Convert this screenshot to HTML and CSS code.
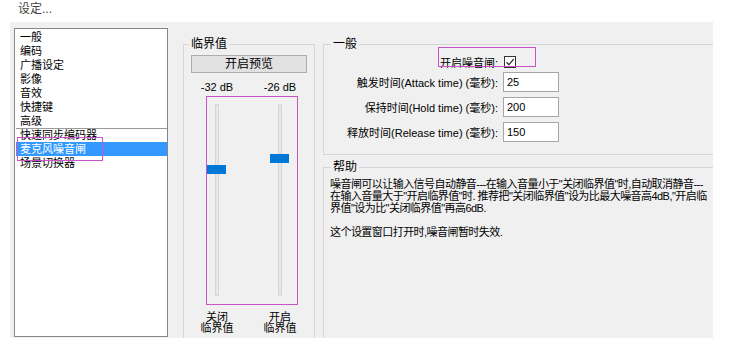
FILE: index.html
```html
<!DOCTYPE html>
<html lang="zh-CN">
<head>
    <meta charset="UTF-8">
    <title>设定</title>
    <link rel="stylesheet" href="styles.css">
</head>
<body>

<div class="title">设定...</div>

<div class="window">
    <div class="nav">
        <div class="item">一般</div>
        <div class="item">编码</div>
        <div class="item">广播设定</div>
        <div class="item">影像</div>
        <div class="item">音效</div>
        <div class="item">快捷键</div>
        <div class="item">高级</div>
        <div class="item sep">快速同步编码器</div>
        <div class="item active">麦克风噪音闸</div>
        <div class="item">场景切换器</div>
        <span class="mark mark-nav"></span>
    </div>

    <fieldset class="group group-threshold">
        <legend>临界值</legend>
        <button class="preview">开启预览</button>
        <div class="cols db">
            <span class="col"><span>-32 dB</span></span>
            <span class="col"><span>-26 dB</span></span>
        </div>
        <div class="meter">
            <div class="slider"><div class="track"></div><div class="thumb thumb-close"></div></div>
            <div class="slider"><div class="track"></div><div class="thumb thumb-open"></div></div>
        </div>
        <div class="cols names">
            <span class="col"><span>关闭<br>临界值</span></span>
            <span class="col"><span>开启<br>临界值</span></span>
        </div>
    </fieldset>

    <div class="side">
        <fieldset class="group group-general">
            <legend>一般</legend>
            <div class="field check">
                <span class="label">开启噪音闸:</span>
                <span class="checkbox">
                    <svg width="10" height="10" viewBox="0 0 10 10"><path d="M1.5 5.2 L4 7.6 L8.6 2.2" fill="none" stroke="#222" stroke-width="1.2"/></svg>
                </span>
                <span class="mark mark-check"></span>
            </div>
            <div class="field first">
                <label class="label">触发时间(Attack time) (毫秒):</label>
                <input type="text" value="25">
            </div>
            <div class="field">
                <label class="label">保持时间(Hold time) (毫秒):</label>
                <input type="text" value="200">
            </div>
            <div class="field">
                <label class="label">释放时间(Release time) (毫秒):</label>
                <input type="text" value="150">
            </div>
        </fieldset>

        <fieldset class="group group-help">
            <legend>帮助</legend>
            <p>噪音闸可以让输入信号自动静音---在输入音量小于"关闭临界值"时,自动取消静音---<br>在输入音量大于"开启临界值"时. 推荐把"关闭临界值"设为比最大噪音高4dB,"开启临<br>界值"设为比"关闭临界值"再高6dB.</p>
            <p class="gap">这个设置窗口打开时,噪音闸暂时失效.</p>
        </fieldset>
    </div>
</div>

</body>
</html>
```

FILE: styles.css
```css
body {
    margin: 0;
    background: #fff;
    font-family: "Liberation Sans", "Noto Sans CJK SC", sans-serif;
    font-size: 11px;
    color: #000;
}

.title {
    height: 22px;
    line-height: 18px;
    padding-left: 18px;
    font-size: 12px;
    color: #444;
}

.window {
    margin-left: 10px;
    width: 703px;
    height: 316px;
    padding: 6px 0 0 4px;
    box-sizing: border-box;
    background: #f0f0f0;
    display: flex;
    align-items: flex-start;
    overflow: hidden;
}

/* список разделов */
.nav {
    position: relative;
    flex-shrink: 0;
    width: 154px;
    height: 309px;
    padding-top: 1px;
    box-sizing: border-box;
    border: 1px solid #828790;
    background: #fff;
}

.item {
    height: 14px;
    line-height: 14px;
    margin-left: 1px;
    padding-left: 4px;
    white-space: nowrap;
}

.item.sep {
    box-shadow: inset 0 1px #9a9a9a;
}

.item.active {
    background: #3399ff;
    color: #fff;
}

.mark {
    position: absolute;
    border: 1px solid #c953c9;
    box-sizing: border-box;
}

.mark-nav {
    left: 2px;
    top: 108px;
    width: 86px;
    height: 24px;
}

/* group boxes */
.group {
    margin: 0;
    padding: 0;
    min-width: 0;
    border: 1px solid #d5d5d5;
    flex-shrink: 0;
}

.group legend {
    margin-left: 5px;
    padding: 0 2px;
    font-size: 12px;
    line-height: 14px;
}

.group-threshold {
    margin: 9px 0 0 15px;
    width: 132px;
    height: 310px;
    box-sizing: border-box;
}

.preview {
    display: block;
    margin: 4px 0 0 7px;
    width: 116px;
    height: 18px;
    padding: 0;
    border: 1px solid #adadad;
    background: #e1e1e1;
    font-family: inherit;
    font-size: 12px;
    line-height: 16px;
    color: #000;
}

.cols {
    display: flex;
    gap: 43px;
    margin-left: 23px;
}

.col {
    width: 20px;
    display: flex;
    justify-content: center;
    white-space: nowrap;
    text-align: center;
}

.db {
    margin-top: 7px;
    line-height: 14px;
}

.names {
    margin-top: 7px;
    line-height: 11px;
}

.meter {
    margin: 2px 0 0 22px;
    width: 92px;
    height: 209px;
    box-sizing: border-box;
    border: 1px solid #c953c9;
    display: flex;
    gap: 43px;
}

.slider {
    position: relative;
    width: 20px;
    display: flex;
    justify-content: center;
}

.track {
    width: 4px;
    height: 192px;
    margin-top: 7px;
    box-sizing: border-box;
    border: 1px solid #d6d6d6;
    background: #e7e7e7;
}

.thumb {
    position: absolute;
    left: 0;
    width: 19px;
    height: 9px;
    background: #0078d7;
}

.thumb-close { top: 68px; }
.thumb-open { top: 57px; }

/* правая часть */
.side {
    flex-shrink: 0;
    width: 420px;
    margin-left: 8px;
    display: flex;
    flex-direction: column;
}

.group-general {
    margin-top: 9px;
    padding-bottom: 12px;
}

.group-general legend,
.group-help legend {
    margin-left: 7px;
}

.field {
    display: flex;
    align-items: center;
    height: 20px;
    margin-top: 5px;
}

.field.first {
    margin-top: 3px;
}

.field.check {
    position: relative;
    height: 14px;
    margin-top: 4px;
}

.label {
    width: 174px;
    text-align: right;
    white-space: nowrap;
}

.field input {
    margin: 0 0 0 5px;
    width: 56px;
    height: 20px;
    box-sizing: border-box;
    padding: 0 3px;
    border: 1px solid #a6a6a6;
    background: #fff;
    font-family: inherit;
    font-size: 11px;
    color: #000;
}

.checkbox {
    margin-left: 6px;
    width: 12px;
    height: 12px;
    box-sizing: border-box;
    border: 1px solid #333;
    background: #fff;
    display: flex;
    align-items: center;
    justify-content: center;
}

.mark-check {
    left: 114px;
    top: -8px;
    width: 98px;
    height: 20px;
}

.group-help {
    margin-top: 5px;
    height: 200px;
}

.group-help p {
    margin: 0;
    padding: 4px 6px 0;
    line-height: 12px;
    letter-spacing: -0.55px;
    white-space: nowrap;
}

.group-help p.gap {
    padding-top: 12px;
}
```
